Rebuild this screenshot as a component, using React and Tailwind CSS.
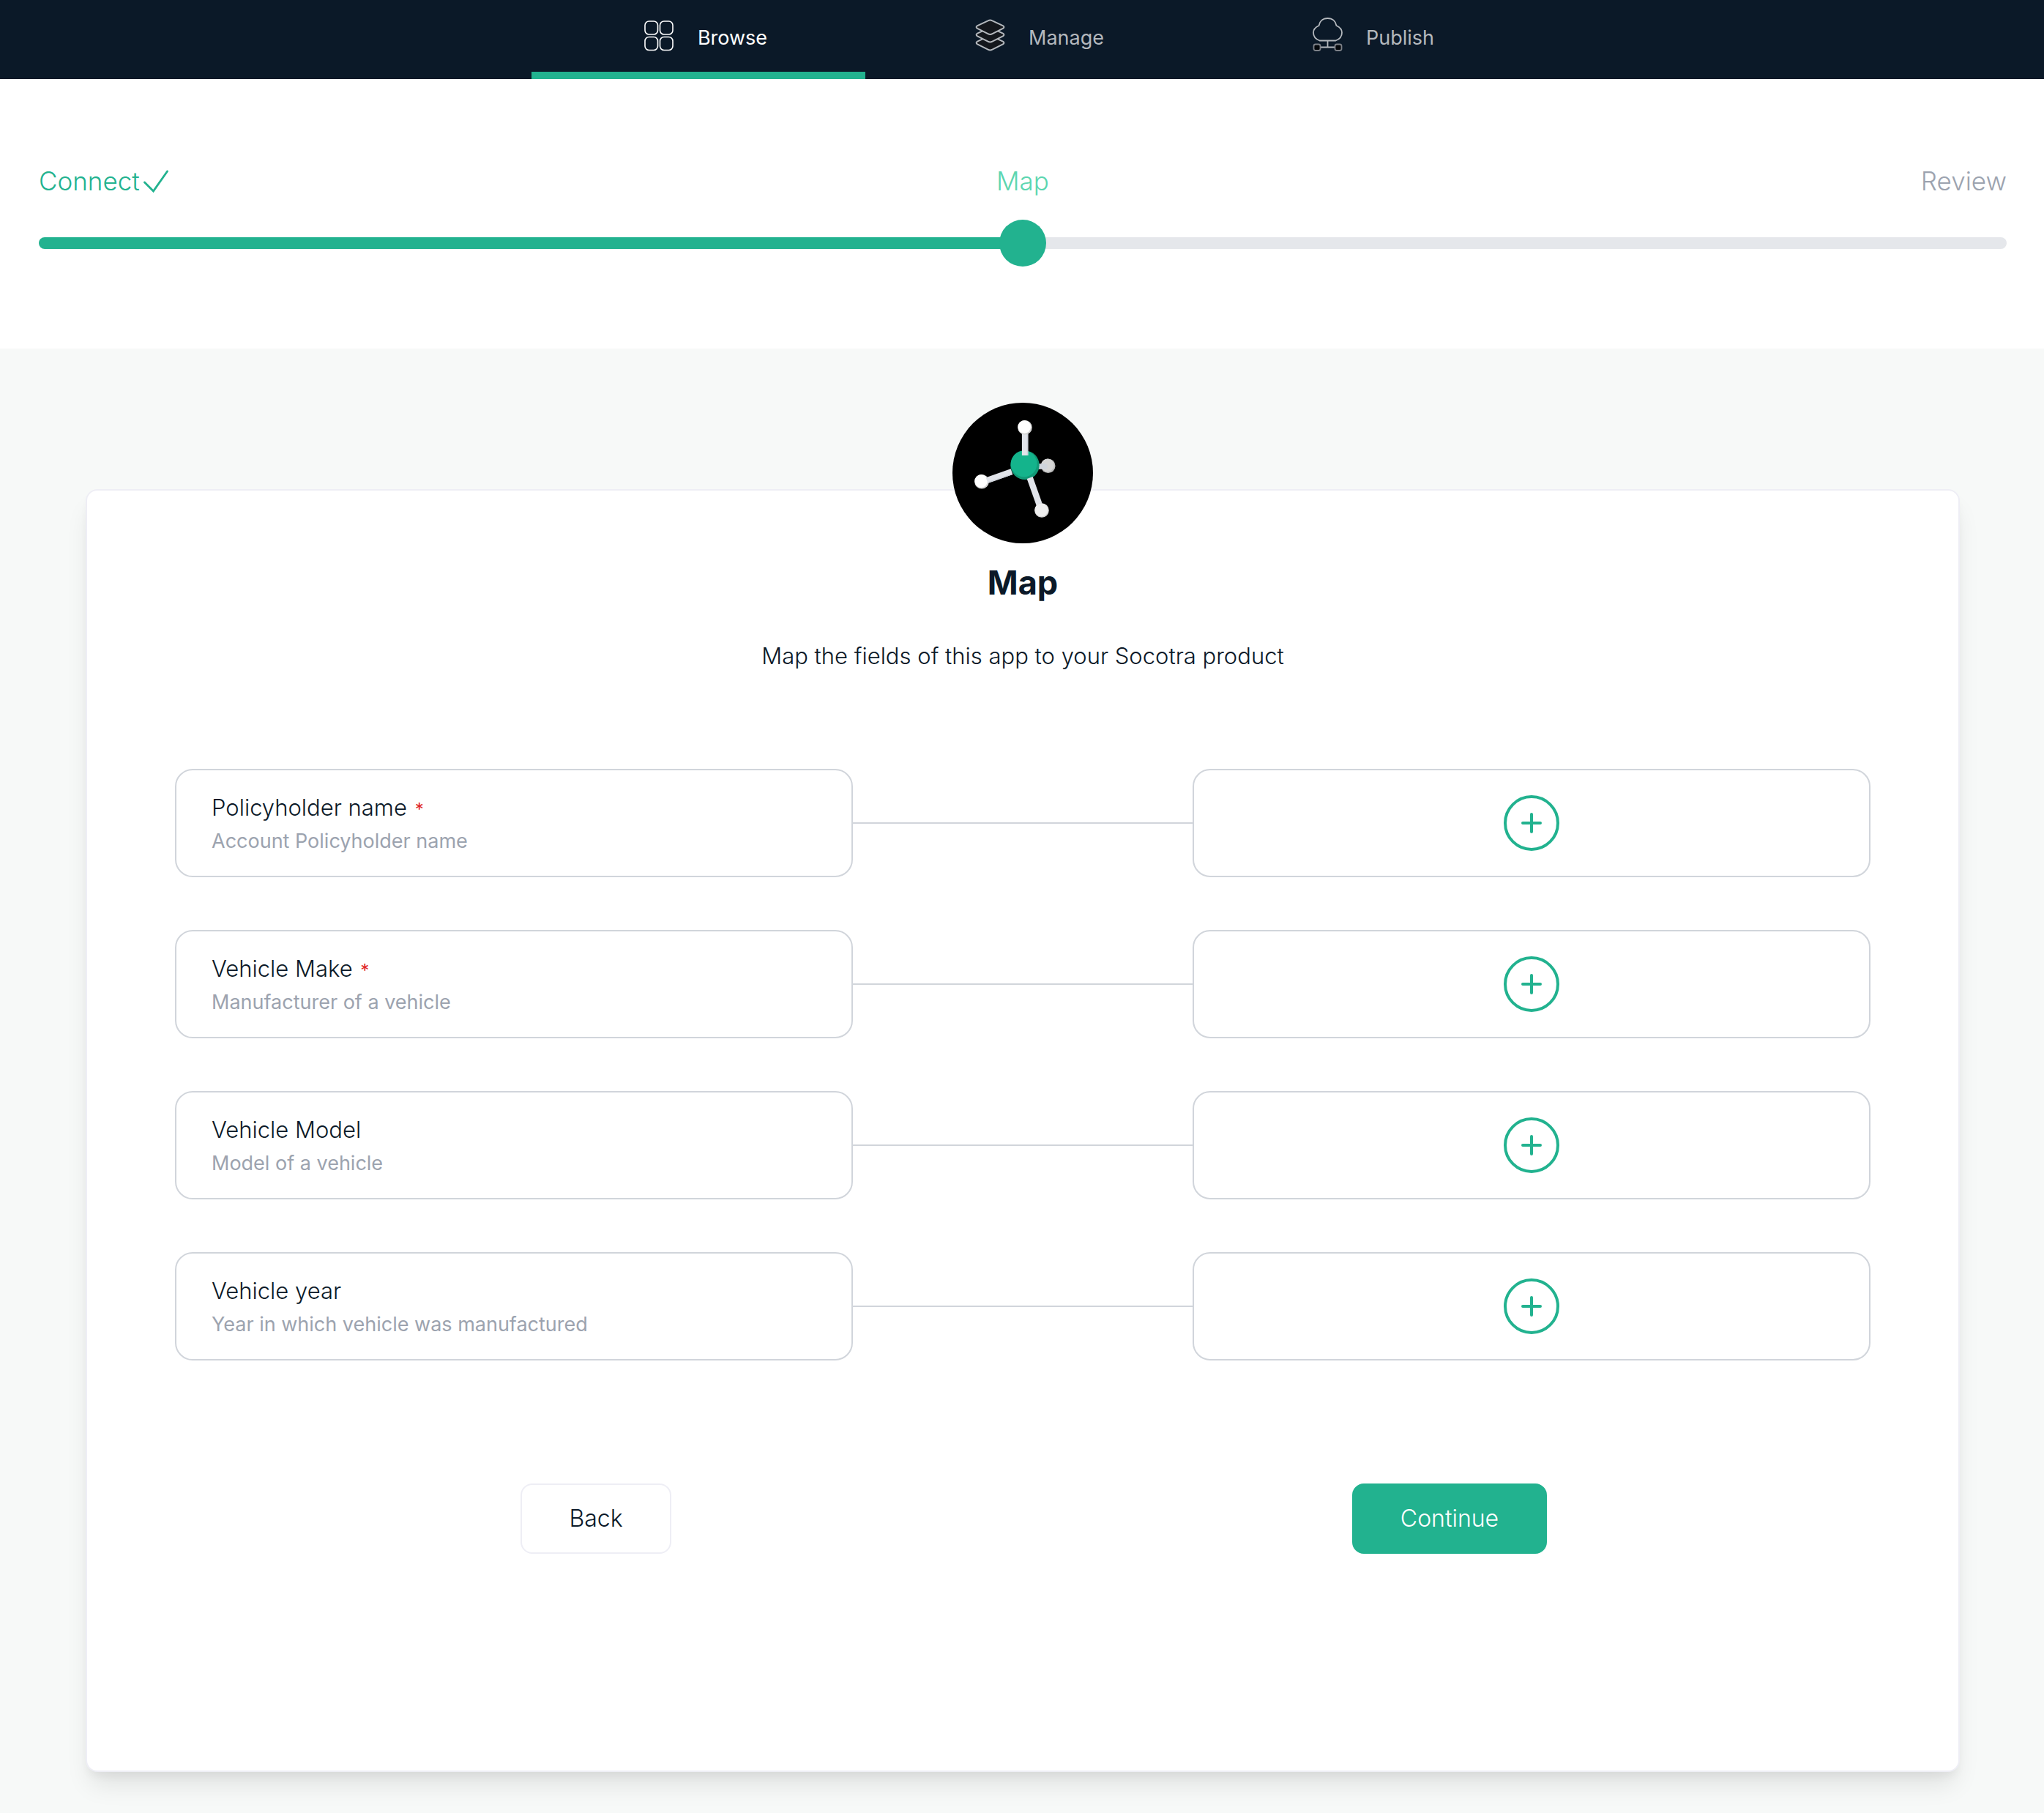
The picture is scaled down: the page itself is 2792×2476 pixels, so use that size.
const BrowseIcon = () => (
  <svg className="h-[46px] w-[41px] shrink-0" viewBox="0 0 41 46" fill="none" stroke="currentColor" strokeWidth="1.6" aria-hidden="true">
    <rect x="1" y="5" width="17.5" height="18" rx="5.5" />
    <rect x="21.5" y="5" width="17.5" height="18" rx="5.5" />
    <rect x="1" y="26.5" width="17.5" height="18" rx="5.5" />
    <rect x="21.5" y="26.5" width="17.5" height="18" rx="5.5" />
  </svg>
);

const LAYER =
  "M17 1.8Q20 .2 23 1.8L37.4 8.6Q40.4 10.4 37.4 12.4L23 19.6Q20 21.2 17 19.6L2.6 12.4Q-.4 10.4 2.6 8.6Z";

const ManageIcon = () => (
  <svg className="h-[46px] w-[41px] shrink-0" viewBox="0 0 41 46" fill="#14171c" stroke="currentColor" strokeWidth="2" aria-hidden="true">
    <path d={LAYER} transform="translate(.5 24)" />
    <path d={LAYER} transform="translate(.5 13)" />
    <path d={LAYER} transform="translate(.5 2.5)" />
  </svg>
);

const PublishIcon = () => (
  <svg className="h-[46px] w-[41px] shrink-0" viewBox="0 0 41 46" fill="none" stroke="currentColor" strokeWidth="1.8" aria-hidden="true">
    <path d="M9.5 31.5C4.2 29.5 1 25.5 1 20.5C1 16 4 13 8.5 11C9.5 5 14 1 20.5 1S31.5 5 32.5 11C37 13 40 16 40 20.5C40 25.5 36.8 29.5 31.5 31.5Z" />
    <path d="M20.5 31.5V40.5M11 40.5H30" />
    <g fill="#05080c" stroke="#7d8188">
      <rect x="1.5" y="36.5" width="9" height="8.5" rx="2.5" />
      <rect x="30.5" y="36.5" width="9" height="8.5" rx="2.5" />
    </g>
  </svg>
);

const CheckIcon = () => (
  <svg className="h-[34px] w-[36px]" viewBox="0 0 36 34" fill="none" stroke="currentColor" strokeWidth="2.8" strokeLinecap="round" aria-hidden="true">
    <path d="M2.5 19L14.5 31L33.5 4" />
  </svg>
);

const PlusIcon = () => (
  <svg className="size-7" viewBox="0 0 28 28" fill="none" stroke="currentColor" strokeWidth="4" strokeLinecap="round" aria-hidden="true">
    <path d="M14 2V26M2 14H26" />
  </svg>
);

const MoleculeLogo = () => (
  <svg className="size-48" viewBox="0 0 192 192" role="img" aria-label="Molecule">
    <circle cx="96" cy="96" r="96" fill="#000" />
    <circle cx="130.7" cy="86.3" r="9.8" fill="#bdbdbd" />
    <circle cx="129.8" cy="85.4" r="8.8" fill="#d6d6d6" />
    <path d="M116 87H126" stroke="#cfd4dc" strokeWidth="7.5" strokeLinecap="round" />
    <circle cx="99" cy="85.3" r="19.7" fill="#119a77" />
    <circle cx="97.6" cy="83.4" r="17.9" fill="#14b48c" />
    <path d="M99.2 40V72" stroke="#e1e4ea" strokeWidth="8.6" />
    <path d="M102.4 42V72" stroke="#cfd4dc" strokeWidth="1.4" />
    <circle cx="99" cy="33.8" r="9.8" fill="#d2d2d2" />
    <circle cx="98.2" cy="33" r="8.9" fill="#fff" />
    <circle cx="40" cy="107.8" r="9.8" fill="#d2d2d2" />
    <circle cx="39.2" cy="107" r="8.9" fill="#fff" />
    <path d="M47 106.2L81 94.2" stroke="#e1e4ea" strokeWidth="8.2" />
    <path d="M48.5 109L82 97.4" stroke="#cfd4dc" strokeWidth="1.4" />
    <path d="M105.7 102.5L119 140" stroke="#e1e4ea" strokeWidth="8.4" />
    <circle cx="122" cy="147" r="9.8" fill="#d2d2d2" />
    <circle cx="121.4" cy="146.4" r="9" fill="#efefef" />
  </svg>
);

const tabs = [
  { label: "Browse", Icon: BrowseIcon, active: true },
  { label: "Manage", Icon: ManageIcon },
  { label: "Publish", Icon: PublishIcon },
];

const fields = [
  { name: "Policyholder name", description: "Account Policyholder name", required: true },
  { name: "Vehicle Make", description: "Manufacturer of a vehicle", required: true },
  { name: "Vehicle Model", description: "Model of a vehicle" },
  { name: "Vehicle year", description: "Year in which vehicle was manufactured" },
];

function Nav() {
  return (
    <nav className="flex justify-center bg-[#0b1928] pl-7 font-normal">
      {tabs.map(({ label, Icon, active }) => (
        <a
          key={label}
          href="#"
          aria-current={active ? "page" : undefined}
          className={
            active
              ? "flex h-27 w-114 items-center justify-center gap-8 border-b-10 border-[#22b28f] pb-1 pl-5 text-white"
              : "flex h-27 w-114 items-center justify-center gap-8 border-b-10 border-transparent pb-1 pl-5 text-[#b4b8bd]"
          }
        >
          <Icon />
          <span className="mt-2.5 text-[27px] leading-10">{label}</span>
        </a>
      ))}
    </nav>
  );
}

function Stepper() {
  return (
    <section className="bg-white pt-[119px] pr-[51px] pb-28 pl-[53px]">
      <ol className="grid grid-cols-3 text-[35px] leading-10">
        <li className="flex items-center gap-1 text-[#22b28f]">
          Connect
          <CheckIcon />
        </li>
        <li className="text-center text-[#5cd6b0]">Map</li>
        <li className="text-right text-[#9ca3af]">Review</li>
      </ol>
      <div
        role="progressbar"
        aria-label="Setup progress"
        aria-valuenow={50}
        className="mt-[33px] flex items-center"
      >
        <div className="-mr-2 h-4 flex-1 rounded-l-full bg-[#22b28f]" />
        <div className="z-10 size-16 rounded-full bg-[#22b28f]" />
        <div className="-ml-2 h-4 flex-1 rounded-r-full bg-[#e5e7eb]" />
      </div>
    </section>
  );
}

function FieldRow({ name, description, required }) {
  return (
    <li className="grid grid-cols-5 items-center">
      <div className="col-span-2 rounded-3xl border-2 border-[#d1d5db] pt-7 pr-12 pb-6 pl-12 leading-[46px]">
        <p className="text-[31px]">
          {name}
          {required && <span className="ml-1 text-2xl leading-none font-normal text-[#e02424]"> *</span>}
        </p>
        <p className="text-[27px] font-normal text-[#9ca3af]">{description}</p>
      </div>
      <div className="h-0.5 bg-[#d1d5db]" />
      <div className="col-span-2 flex items-center justify-center self-stretch rounded-3xl border-2 border-[#d1d5db]">
        <button
          type="button"
          aria-label={`Map ${name}`}
          className="flex size-19 items-center justify-center rounded-full border-4 border-[#22b28f] text-[#22b28f]"
        >
          <PlusIcon />
        </button>
      </div>
    </li>
  );
}

export default function App() {
  return (
    <div className="flex min-h-screen flex-col bg-[#f7f9f8] font-['Inter','Open_Sans',sans-serif] font-light text-[#0b1928]">
      <Nav />
      <Stepper />
      <main className="mt-48 mr-[115px] mb-14 ml-[117px] rounded-2xl border-2 border-[#eeeef5] bg-white px-30 pb-74 shadow-[0_23px_34px_-7px_rgba(0,0,0,0.1),0_9px_13px_-4px_rgba(0,0,0,0.05)]">
        <header className="-mt-30 flex flex-col items-center">
          <MoleculeLogo />
          <h1 className="mt-[26px] text-[45px] leading-14 font-bold">Map</h1>
          <p className="mt-13 text-[31px] leading-10">Map the fields of this app to your Socotra product</p>
        </header>
        <ul className="mt-[134px] flex flex-col gap-18">
          {fields.map((field) => (
            <FieldRow key={field.name} {...field} />
          ))}
        </ul>
        <div className="-mx-2 mt-42 grid grid-cols-2 justify-items-center text-[32px] leading-12">
          <button type="button" className="rounded-2xl border-2 border-[#eeeef5] px-16 py-[22px]">
            Back
          </button>
          <button type="button" className="rounded-2xl border-2 border-[#22b28f] bg-[#22b28f] px-16 py-[22px] text-white">
            Continue
          </button>
        </div>
      </main>
    </div>
  );
}
